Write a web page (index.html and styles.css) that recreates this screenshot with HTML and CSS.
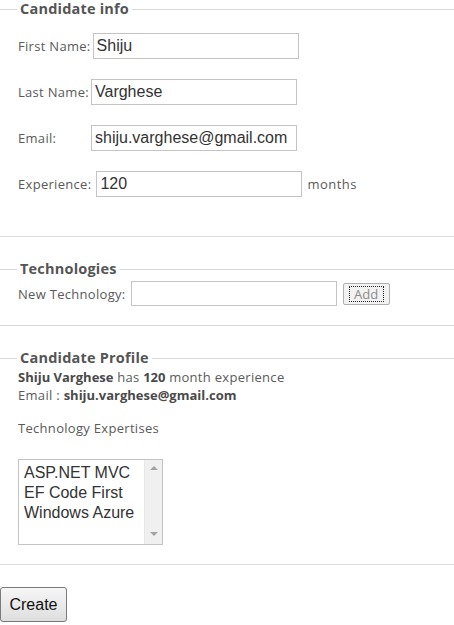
FILE: index.html
```html
<!DOCTYPE html>
<html lang="en">
<head>
<meta charset="utf-8">
<title>Candidate</title>
<link rel="stylesheet" href="styles.css">
</head>
<body>
<form class="form">
  <fieldset class="group group-info">
    <legend class="legend">Candidate info</legend>
    <div class="row">
      <label class="label">First Name:</label>
      <input class="field" type="text" value="Shiju">
    </div>
    <div class="row">
      <label class="label">Last Name:</label>
      <input class="field" type="text" value="Varghese">
    </div>
    <div class="row">
      <label class="label">Email:</label>
      <input class="field" type="text" value="shiju.varghese@gmail.com">
    </div>
    <div class="row">
      <label class="label label-exp">Experience:</label>
      <input class="field" type="text" value="120">
      <span class="unit">months</span>
    </div>
  </fieldset>

  <fieldset class="group group-tech">
    <legend class="legend">Technologies</legend>
    <div class="row row-tech">
      <label class="label label-tech">New Technology:</label>
      <input class="field" type="text" value="">
      <button class="add" type="button"><span class="add-focus">Add</span></button>
    </div>
  </fieldset>

  <fieldset class="group group-profile">
    <legend class="legend">Candidate Profile</legend>
    <p class="line first"><b>Shiju Varghese</b> has <b>120</b> month experience</p>
    <p class="line">Email : <b>shiju.varghese@gmail.com</b></p>
    <p class="line sub">Technology Expertises</p>
    <div class="listbox" role="listbox">
      <div class="options">
        <div class="option" role="option">ASP.NET MVC</div>
        <div class="option" role="option">EF Code First</div>
        <div class="option" role="option">Windows Azure</div>
      </div>
      <div class="scrollbar">
        <span class="arrow arrow-up"></span>
        <span class="arrow arrow-down"></span>
      </div>
    </div>
  </fieldset>

  <div class="actions">
    <button class="create" type="submit">Create</button>
  </div>
</form>
</body>
</html>
```

FILE: styles.css
```css
html, body {
  margin: 0;
  padding: 0;
  background: #fff;
}

body {
  font-family: "Open Sans", "DejaVu Sans", sans-serif;
  font-size: 13px;
  letter-spacing: 0.3px;
  color: #5a5a5a;
}

.form {
  margin: 0;
}

.group {
  margin: 0;
  border: none;
  border-top: 1px solid #d9d9d9;
  border-bottom: 1px solid #d9d9d9;
  padding: 0 0 0 17px;
  min-width: 0;
}

.legend {
  padding: 0 3px;
  font-weight: bold;
  font-size: 14.5px;
  line-height: 18px;
  letter-spacing: 0.2px;
  color: #555;
}

.group-info {
  padding-top: 15px;
  padding-bottom: 39px;
}

.group-tech {
  margin-top: 23px;
  padding-top: 3px;
  padding-bottom: 19px;
}

.group-profile {
  margin-top: 23px;
  padding-top: 1px;
  padding-bottom: 19px;
}

.row {
  display: flex;
  align-items: center;
  padding-left: 1px;
}

.row + .row {
  margin-top: 20px;
}

.label {
  min-width: 71px;
  margin-right: 2px;
  white-space: nowrap;
}

.label-exp {
  margin-right: 5px;
}

.label-tech {
  margin-right: 5px;
}

.field {
  box-sizing: border-box;
  width: 206px;
  height: 26px;
  margin: 0;
  padding: 0 4px 0 3px;
  border: 1px solid #c4c4c4;
  font-family: "Liberation Sans", Arial, sans-serif;
  font-size: 16px;
  letter-spacing: 0;
  color: #333;
  background: #fff;
  outline: none;
}

.row-tech .field {
  height: 25px;
}

.unit {
  margin-left: 5px;
  letter-spacing: 0.5px;
}

.add {
  box-sizing: border-box;
  margin-left: 6px;
  height: 22px;
  width: 47px;
  padding: 2px;
  border: 1px solid #b0b0b0;
  border-radius: 2px;
  background: #f2f2f2;
  font-family: "Open Sans", "DejaVu Sans", sans-serif;
  font-size: 13px;
  color: #8a8a8a;
}

.add-focus {
  display: block;
  border: 1px dotted #222;
  line-height: 14px;
  padding: 0 1px;
  margin: 0 3px;
}

.line {
  margin: 0;
  line-height: 18px;
  padding-left: 1px;
  color: #5a5a5a;
}

.line b {
  color: #4a4a4a;
  letter-spacing: 0;
}

.sub {
  margin-top: 15px;
}

.listbox {
  box-sizing: border-box;
  display: flex;
  width: 145px;
  height: 86px;
  margin-top: 22px;
  margin-left: 1px;
  border: 1px solid #c4c4c4;
  background: #fff;
}

.options {
  flex: 1;
  padding: 3px 0 0 5px;
  font-family: "Liberation Sans", Arial, sans-serif;
  font-size: 16px;
  line-height: 20px;
  letter-spacing: 0;
  color: #333;
}

.scrollbar {
  position: relative;
  width: 17px;
  background: #f0f0f0;
  border-left: 1px solid #e6e6e6;
}

.arrow {
  position: absolute;
  left: 5px;
  width: 0;
  height: 0;
  border-left: 4px solid transparent;
  border-right: 4px solid transparent;
}

.arrow-up {
  top: 6px;
  border-bottom: 4px solid #a3a3a3;
}

.arrow-down {
  bottom: 8px;
  border-top: 4px solid #a3a3a3;
}

.actions {
  padding-top: 22px;
}

.create {
  box-sizing: border-box;
  width: 67px;
  height: 35px;
  margin: 0;
  padding: 0;
  border: 1px solid #7a7a7a;
  border-radius: 3px;
  background: linear-gradient(#f6f6f6, #dedede);
  font-family: "Liberation Sans", Arial, sans-serif;
  font-size: 16px;
  letter-spacing: 0;
  color: #111;
}
```
